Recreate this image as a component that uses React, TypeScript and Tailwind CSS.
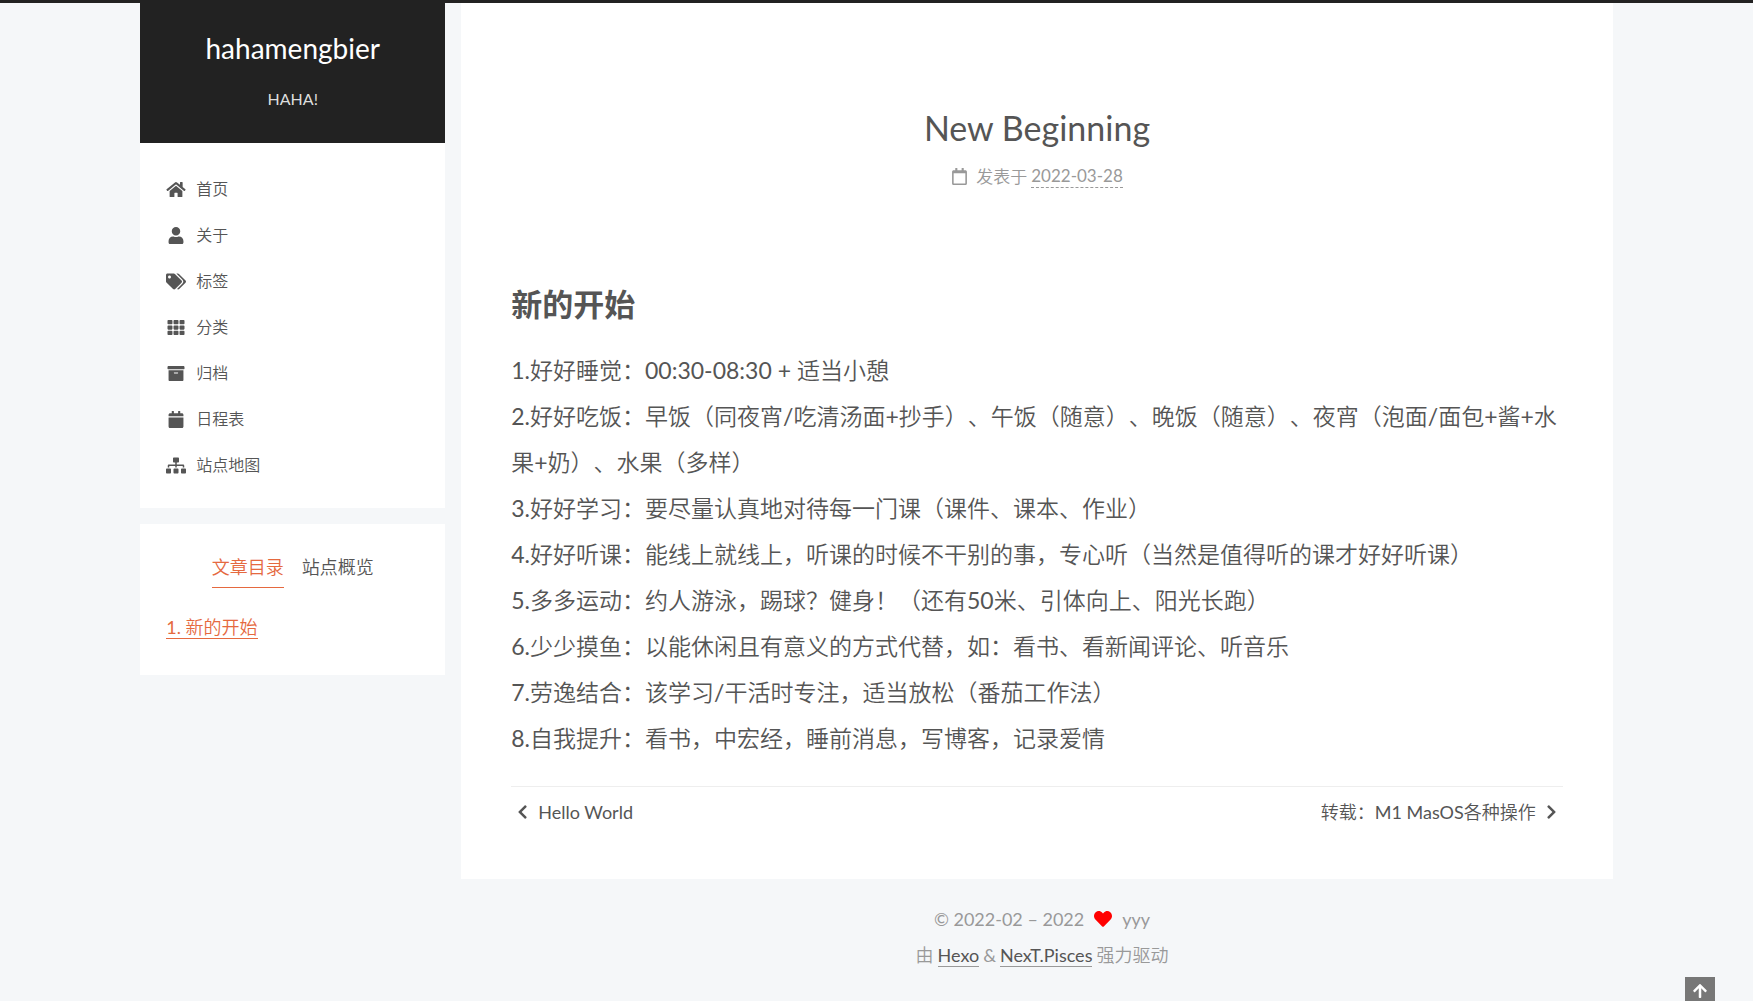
import type { IconType } from 'react-icons';
import {
  FaArchive,
  FaArrowUp,
  FaCalendar,
  FaChevronLeft,
  FaChevronRight,
  FaHeart,
  FaHome,
  FaRegCalendar,
  FaSitemap,
  FaTags,
  FaTh,
  FaUser,
} from 'react-icons/fa';

const menu: { label: string; icon: IconType }[] = [
  { label: '首页', icon: FaHome },
  { label: '关于', icon: FaUser },
  { label: '标签', icon: FaTags },
  { label: '分类', icon: FaTh },
  { label: '归档', icon: FaArchive },
  { label: '日程表', icon: FaCalendar },
  { label: '站点地图', icon: FaSitemap },
];

const goals = [
  '1.好好睡觉：00:30-08:30 + 适当小憩',
  '2.好好吃饭：早饭（同夜宵/吃清汤面+抄手）、午饭（随意）、晚饭（随意）、夜宵（泡面/面包+酱+水果+奶）、水果（多样）',
  '3.好好学习：要尽量认真地对待每一门课（课件、课本、作业）',
  '4.好好听课：能线上就线上，听课的时候不干别的事，专心听（当然是值得听的课才好好听课）',
  '5.多多运动：约人游泳，踢球？健身！（还有50米、引体向上、阳光长跑）',
  '6.少少摸鱼：以能休闲且有意义的方式代替，如：看书、看新闻评论、听音乐',
  '7.劳逸结合：该学习/干活时专注，适当放松（番茄工作法）',
  '8.自我提升：看书，中宏经，睡前消息，写博客，记录爱情',
];

function Sidebar() {
  return (
    <aside className="flex w-[305px] shrink-0 flex-col gap-4">
      <div className="bg-white">
        <header className="flex flex-col items-center bg-[#222] pt-6 pb-[30px] text-center">
          <a href="#home" className="text-[28px] leading-[42px] text-white">
            hahamengbier
          </a>
          <p className="mt-4 text-base leading-7 text-[#ddd]">HAHA!</p>
        </header>
        <nav className="pt-[23px] pb-5">
          <ul>
            {menu.map(({ label, icon: Icon }) => (
              <li key={label}>
                <a href={`#${label}`} className="flex h-[46px] items-center gap-2.5 px-[26px] text-base">
                  <Icon className="w-5 text-[17px]" />
                  {label}
                </a>
              </li>
            ))}
          </ul>
        </nav>
      </div>
      <div className="bg-white px-[26px] pt-6 pb-8">
        <div className="flex justify-center gap-[18px] text-lg leading-[39px]" role="tablist">
          <button type="button" role="tab" aria-selected="true" className="border-b border-[#e5693f] text-[#e5693f]">
            文章目录
          </button>
          <button type="button" role="tab" aria-selected="false" className="border-b border-transparent">
            站点概览
          </button>
        </div>
        <ol className="mt-[23px] flex h-8 items-center text-lg leading-[22px]">
          <li>
            <a href="#new-start" className="inline-block border-b border-[#e5693f] text-[#e5693f]">
              1. 新的开始
            </a>
          </li>
        </ol>
      </div>
    </aside>
  );
}

function Post() {
  return (
    <article className="bg-white px-[50px] pt-[104px] pb-[49px]">
      <header className="text-center">
        <h1 className="text-[34px] leading-[42px]">New Beginning</h1>
        <div className="mt-4 flex items-center justify-center text-[17px] leading-[22px] text-[#999]">
          <FaRegCalendar className="mr-2" />
          <span>发表于</span>
          <time dateTime="2022-03-28" className="ml-1 border-b border-dashed border-[#999] leading-[22px]">
            2022-03-28
          </time>
        </div>
      </header>
      <div className="mt-[93px]">
        <h2 id="new-start" className="font-[Lato,'Noto_Sans_CJK_SC',sans-serif] text-[31px] leading-[46px] font-bold">
          新的开始
        </h2>
        <div className="mt-5 text-[23px] leading-[46px]">
          {goals.map((goal) => (
            <p key={goal}>{goal}</p>
          ))}
        </div>
      </div>
      <nav className="mt-[25px] flex justify-between border-t border-[#eee] px-1.5 pt-[7px] text-lg leading-9">
        <a href="#prev" className="flex items-center gap-2.5">
          <FaChevronLeft className="w-[11px] text-base" />
          Hello World
        </a>
        <a href="#next" className="flex items-center gap-2.5">
          转载：M1 MasOS各种操作
          <FaChevronRight className="w-[11px] text-base" />
        </a>
      </nav>
    </article>
  );
}

export default function App() {
  return (
    <div className="min-h-screen border-t-[3px] border-[#222] bg-[#f5f7f9] font-[Lato,'Noto_Sans_CJK_SC_DemiLight','Noto_Sans_CJK_SC_Light','Noto_Sans_CJK_SC',sans-serif] text-[#555] [text-spacing-trim:space-all]">
      <div className="mx-auto flex w-[84%] items-start gap-4">
        <Sidebar />
        <div className="min-w-0 flex-1">
          <Post />
          <footer className="pt-[22px] pb-6 pl-2.5 text-center text-lg leading-9 text-[#999]">
            <div className="flex items-center justify-center">
              © 2022-02 – 2022
              <FaHeart className="mx-2.5 text-[#f00]" />
              yyy
            </div>
            <div className="flex items-center justify-center gap-1">
              <span>由</span>
              <a href="#hexo" className="border-b border-[#999] leading-[22px] text-[#555]">
                Hexo
              </a>
              &amp;
              <a href="#pisces" className="border-b border-[#999] leading-[22px] text-[#555]">
                NexT.Pisces
              </a>
              <span>强力驱动</span>
            </div>
          </footer>
        </div>
      </div>
      <button
        type="button"
        aria-label="回到顶部"
        className="fixed right-[38px] -bottom-1 flex h-7 w-[30px] items-center justify-center bg-[#777] text-base text-white"
      >
        <FaArrowUp />
      </button>
    </div>
  );
}
